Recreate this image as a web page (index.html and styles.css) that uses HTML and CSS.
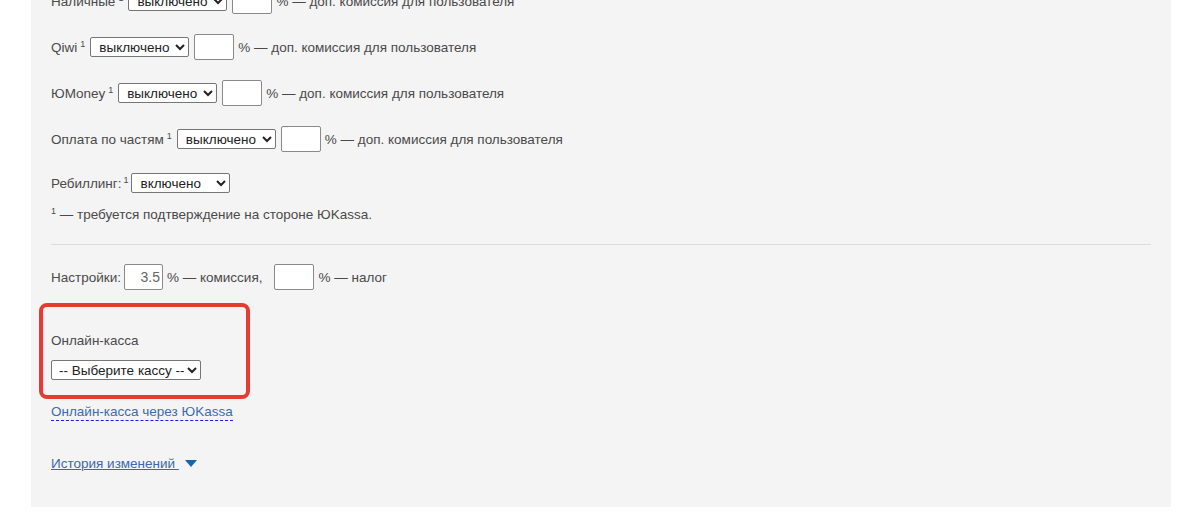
FILE: index.html
```html
<!DOCTYPE html>
<html lang="ru">
<head>
<meta charset="utf-8">
<title>ЮKassa</title>
<link rel="stylesheet" href="styles.css">
</head>
<body>
<div class="panel">
  <div class="methods">
    <div class="row">
      <span class="label">Наличные<sup>1</sup></span>
      <select class="sel"><option>выключено</option><option>включено</option></select>
      <input class="num" type="text">
      <span class="txt">% — доп. комиссия для пользователя</span>
    </div>
    <div class="row">
      <span class="label">Qiwi<sup>1</sup></span>
      <select class="sel"><option>выключено</option><option>включено</option></select>
      <input class="num" type="text">
      <span class="txt">% — доп. комиссия для пользователя</span>
    </div>
    <div class="row">
      <span class="label">ЮMoney<sup>1</sup></span>
      <select class="sel"><option>выключено</option><option>включено</option></select>
      <input class="num" type="text">
      <span class="txt">% — доп. комиссия для пользователя</span>
    </div>
    <div class="row row-last">
      <span class="label">Оплата по частям<sup>1</sup></span>
      <select class="sel"><option>выключено</option><option>включено</option></select>
      <input class="num" type="text">
      <span class="txt">% — доп. комиссия для пользователя</span>
    </div>
    <div class="row row-rebill">
      <span class="label label-rebill">Ребиллинг:<sup>1</sup></span>
      <select class="sel"><option>включено</option><option>выключено</option></select>
    </div>
  </div>
  <p class="note"><sup>1</sup> — требуется подтверждение на стороне ЮKassa.</p>
  <hr class="sep">
  <div class="row row-settings">
    <span class="label label-tight">Настройки:</span>
    <input class="num num-val" type="text" value="3.5">
    <span class="txt txt-gap">% — комиссия,</span>
    <input class="num" type="text">
    <span class="txt">% — налог</span>
  </div>
  <div class="kassa">
    <div class="kassa-label">Онлайн-касса</div>
    <select class="sel sel-kassa"><option>-- Выберите кассу --</option></select>
  </div>
  <a class="dash-link" href="#">Онлайн-касса через ЮKassa</a>
  <div class="history">
    <a class="hist-link" href="#">История изменений </a>
    <svg class="tri" width="12" height="8" viewBox="0 0 12 8"><path d="M0 0 H12 L6 7 Z" fill="#1565b0"/></svg>
  </div>
</div>
</body>
</html>
```
FILE: styles.css
```css
html, body {
  margin: 0;
  padding: 0;
  background: #ffffff;
}
body {
  font-family: "Liberation Sans", Arial, sans-serif;
  font-size: 13.5px;
  color: #4a4a4a;
  overflow: hidden;
}
.panel {
  margin-left: 31px;
  width: 1100px;
  padding: 0 20px 35px 20px;
  background: #f4f4f4;
}
.methods {
  margin-top: -12px;
}
.row {
  display: flex;
  align-items: center;
  height: 26px;
  margin-bottom: 20px;
  white-space: nowrap;
}
.row-last {
  margin-bottom: 18px;
}
.row-rebill {
  margin-bottom: 0;
}
.label {
  margin-right: 5px;
}
.label-rebill {
  margin-right: 3px;
}
sup {
  font-size: 9px;
  line-height: 0;
  vertical-align: 0;
  position: relative;
  top: -5px;
}
.label sup {
  margin-left: 3px;
}
.label-rebill sup {
  margin-left: 2px;
}
.label-tight {
  margin-right: 3px;
}
.sel {
  font-family: "Liberation Sans", Arial, sans-serif;
  font-size: 13.5px;
  color: #222;
  height: 20px;
  box-sizing: border-box;
  border: 1px solid #767676;
  border-radius: 2px;
  background: #fff;
  padding: 0 2px 0 4px;
  margin: 0;
}
.num {
  width: 40px;
  height: 26px;
  box-sizing: border-box;
  border: 1px solid #8a8a8a;
  border-radius: 2px;
  background: #fff;
  margin: 0 0 0 5px;
  padding: 0 4px;
  font-family: "Liberation Sans", Arial, sans-serif;
  font-size: 14px;
  color: #666;
}
.num-val {
  margin-left: 0;
  width: 39px;
  text-align: right;
  padding-right: 2px;
}
.txt {
  margin-left: 4px;
}
.txt-gap {
  margin-right: 7px;
}
.note {
  margin: 10px 0 0 0;
  line-height: 18px;
}
.sep {
  border: 0;
  border-top: 1px solid #dcdcdc;
  height: 0;
  margin: 20px 0 19px 0;
}
.row-settings {
  margin-bottom: 0;
}
.kassa {
  margin: 13px 0 0 -12px;
  box-sizing: border-box;
  width: 211px;
  border: 4px solid #e63b30;
  border-radius: 8px;
  padding: 25px 8px 15px 8px;
}
.kassa-label {
  line-height: 18px;
}
.sel-kassa {
  display: block;
  margin-top: 10px;
  padding: 0 0 0 3px;
  width: 150px;
}
.dash-link {
  display: inline-block;
  margin-top: 5px;
  line-height: 16px;
  color: #3b6cb0;
  text-decoration: none;
  border-bottom: 1px dashed #1a1aff;
}
.history {
  display: flex;
  align-items: center;
  margin-top: 35px;
  line-height: 16px;
}
.hist-link {
  color: #3a6aa8;
  text-decoration: underline;
  white-space: pre;
}
.tri {
  margin-left: 6px;
}
```
